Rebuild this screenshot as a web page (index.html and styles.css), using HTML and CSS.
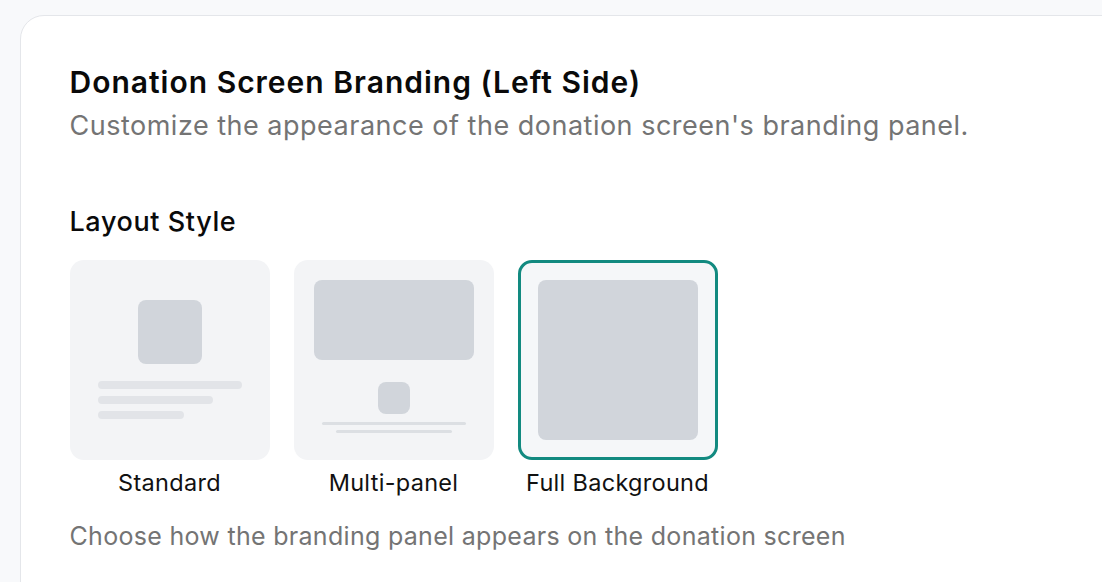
FILE: index.html
```html
<!DOCTYPE html>
<html lang="en">
<head>
<meta charset="utf-8">
<title>Donation Screen Branding</title>
<link rel="stylesheet" href="styles.css">
</head>
<body>
<main class="card">
  <h1 class="title">Donation Screen Branding (Left Side)</h1>
  <p class="subtitle">Customize the appearance of the donation screen's branding panel.</p>

  <section class="field">
    <h2 class="field-label">Layout Style</h2>
    <div class="options">
      <div class="option">
        <div class="preview preview-standard">
          <div class="logo-sq"></div>
          <div class="lines">
            <span class="line l1"></span>
            <span class="line l2"></span>
            <span class="line l3"></span>
          </div>
        </div>
        <div class="option-name">Standard</div>
      </div>
      <div class="option">
        <div class="preview preview-multi">
          <div class="banner"></div>
          <div class="small-sq"></div>
          <div class="thin-lines">
            <span class="tline t1"></span>
            <span class="tline t2"></span>
          </div>
        </div>
        <div class="option-name">Multi-panel</div>
      </div>
      <div class="option">
        <div class="preview preview-full selected">
          <div class="full-rect"></div>
        </div>
        <div class="option-name">Full Background</div>
      </div>
    </div>
    <p class="help">Choose how the branding panel appears on the donation screen</p>
  </section>
</main>
</body>
</html>
```

FILE: styles.css
```css
* { box-sizing: border-box; }
html, body {
  margin: 0;
  padding: 0;
  background: #f8f9fb;
  font-family: Inter, "Noto Sans", sans-serif;
  color: #111111;
  overflow: hidden;
}
.card {
  margin: 15px 0 0 20px;
  width: 1200px;
  min-height: 700px;
  background: #ffffff;
  border: 1.5px solid #e4e6ea;
  border-radius: 24px;
  padding: 48px 48px 48px 48.5px;
}
.title {
  margin: 0;
  font-size: 30px;
  line-height: 36px;
  font-weight: 600;
  letter-spacing: 1px;
  color: #0a0a0a;
}
.subtitle {
  margin: 9px 0 0;
  font-size: 27px;
  line-height: 34px;
  font-weight: 400;
  letter-spacing: 0.5px;
  color: #747474;
}
.field { margin-top: 62px; }
.field-label {
  margin: 0;
  font-size: 27px;
  line-height: 34px;
  font-weight: 500;
  letter-spacing: 0.6px;
  color: #0a0a0a;
}
.options {
  display: flex;
  gap: 24px;
  margin-top: 20.5px;
}
.option {
  display: flex;
  flex-direction: column;
  align-items: center;
  width: 200px;
}
.preview {
  width: 200px;
  height: 200px;
  border-radius: 14px;
  background: #f3f4f6;
  display: flex;
  flex-direction: column;
  align-items: center;
}
.preview-standard { padding-top: 40px; }
.logo-sq {
  width: 64px;
  height: 64px;
  border-radius: 8px;
  background: #d1d5db;
}
.lines {
  align-self: stretch;
  padding: 17px 28px 0;
  display: flex;
  flex-direction: column;
  gap: 7px;
}
.line {
  display: block;
  height: 8px;
  border-radius: 4px;
  background: #e2e4e8;
}
.l1 { width: 144px; }
.l2 { width: 115px; }
.l3 { width: 86px; }

.preview-multi { padding-top: 20px; }
.banner {
  width: 160px;
  height: 80px;
  border-radius: 8px;
  background: #d1d5db;
}
.small-sq {
  margin-top: 22px;
  width: 32px;
  height: 32px;
  border-radius: 8px;
  background: #d1d5db;
}
.thin-lines {
  margin-top: 8px;
  display: flex;
  flex-direction: column;
  align-items: center;
  gap: 5px;
}
.tline {
  display: block;
  height: 3px;
  border-radius: 2px;
  background: #dcdfe3;
}
.t1 { width: 144px; }
.t2 { width: 116px; }

.preview-full {
  justify-content: center;
}
.selected {
  border: 3px solid #128a80;
  background: #f5f7f9;
}
.full-rect {
  width: 160px;
  height: 160px;
  border-radius: 8px;
  background: #d1d5db;
}
.option-name {
  margin-top: 8px;
  font-size: 23.5px;
  line-height: 30px;
  letter-spacing: 0.3px;
  color: #111111;
  white-space: nowrap;
}
.help {
  margin: 22px 0 0;
  font-size: 25px;
  line-height: 32px;
  letter-spacing: 0.3px;
  color: #747474;
}
```
